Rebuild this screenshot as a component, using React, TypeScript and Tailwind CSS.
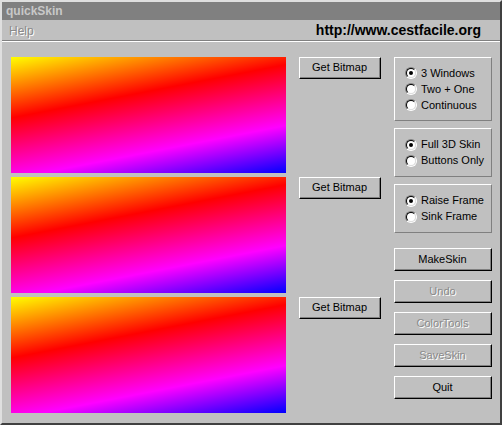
import React from "react";

const font = { fontFamily: '"Liberation Sans", Arial, sans-serif' };

const gradient =
  "bg-[linear-gradient(169deg,#ffff00_0%,#ff0000_36%,#ff00ff_72%,#0000ff_100%)]";

const Button: React.FC<{ label: string; disabled?: boolean; className?: string }> = ({
  label,
  disabled,
  className = "",
}) => (
  <div
    className={`flex items-center justify-center border border-t-white border-l-white border-r-black border-b-black bg-[#c0c0c0] ${className}`}
  >
    <div className="flex h-full w-full items-center justify-center border-r border-b border-r-[#808080] border-b-[#808080]">
      <span
        className={
          disabled
            ? "text-[11px] text-[#8a8a8a] [text-shadow:1px_1px_0_#ffffff]"
            : "text-[11px] text-black"
        }
      >
        {label}
      </span>
    </div>
  </div>
);

const Radio: React.FC<{ label: string; checked?: boolean }> = ({ label, checked }) => (
  <div className="flex h-[16px] items-center gap-[4px]">
    <div className="flex h-[12px] w-[12px] items-center justify-center rounded-full border border-t-[#808080] border-l-[#808080] border-b-white border-r-white">
      <div className="flex h-[10px] w-[10px] items-center justify-center rounded-full border border-t-black border-l-black border-b-[#dfdfdf] border-r-[#dfdfdf] bg-white">
        {checked && <div className="h-[4px] w-[4px] rounded-full bg-black" />}
      </div>
    </div>
    <span className="text-[11px] leading-none text-black">{label}</span>
  </div>
);

const Group: React.FC<{ items: string[]; className?: string }> = ({ items, className = "" }) => (
  <div
    className={`flex flex-col justify-center border border-t-white border-l-white border-r-[#808080] border-b-[#808080] pl-[10px] ${className}`}
  >
    <div className="flex flex-col border-0">
      {items.map((it, i) => (
        <Radio key={it} label={it} checked={i === 0} />
      ))}
    </div>
  </div>
);

export default function App() {
  return (
    <div
      style={font}
      className="flex h-[425px] w-[502px] flex-col border-2 border-t-[#dfdfdf] border-l-[#dfdfdf] border-r-[#404040] border-b-[#404040] bg-[#c0c0c0]"
    >
      <div className="flex h-[18px] items-center bg-[#808080] px-[4px]">
        <span className="text-[12px] font-bold text-[#c8c8c8]">quickSkin</span>
      </div>
      <div className="flex h-[20px] items-center justify-between pl-[7px] pr-[19px] pt-[1px]">
        <span className="text-[12px] text-[#8a8a8a] [text-shadow:1px_1px_0_#ffffff]">Help</span>
        <span className="text-[14px] font-bold text-black">http://www.cestfacile.org</span>
      </div>
      <div className="h-[2px] border-t border-b border-t-[#808080] border-b-white" />

      <div className="flex gap-[13px] pl-[9px] pt-[15px]">
        <div className="flex flex-col gap-[4px]">
          {[0, 1, 2].map((i) => (
            <div key={i} className="flex items-start gap-[13px]">
              <div className={`h-[116px] w-[275px] ${gradient}`} />
              <Button label="Get Bitmap" className="h-[22px] w-[82px]" />
            </div>
          ))}
        </div>

        <div className="flex w-[98px] flex-col">
          <Group items={["3 Windows", "Two + One", "Continuous"]} className="h-[64px]" />
          <Group items={["Full 3D Skin", "Buttons Only"]} className="mt-[7px] h-[49px]" />
          <Group items={["Raise Frame", "Sink Frame"]} className="mt-[7px] h-[49px]" />
          <div className="mt-[15px] flex flex-col gap-[9px]">
            <Button label="MakeSkin" className="h-[23px] w-full" />
            <Button label="Undo" disabled className="h-[23px] w-full" />
            <Button label="ColorTools" disabled className="h-[23px] w-full" />
            <Button label="SaveSkin" disabled className="h-[23px] w-full" />
            <Button label="Quit" className="h-[23px] w-full" />
          </div>
        </div>
      </div>
    </div>
  );
}
